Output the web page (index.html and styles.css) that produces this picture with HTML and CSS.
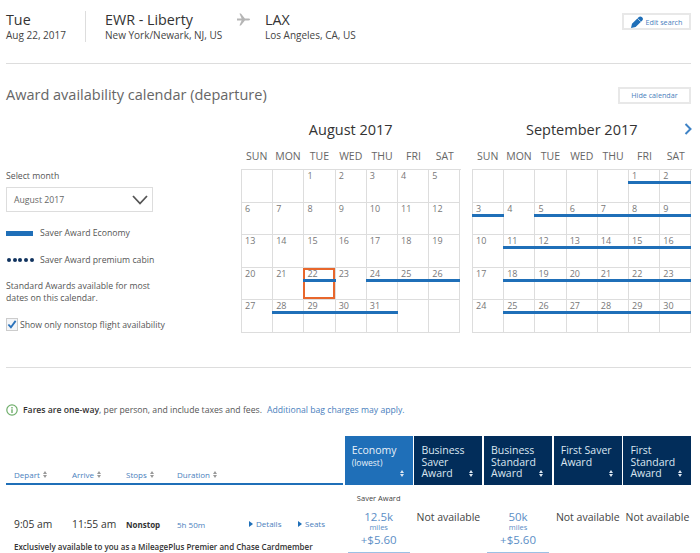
FILE: index.html
```html
<!DOCTYPE html>
<html lang="en">
<head>
<meta charset="utf-8">
<title>Award availability calendar</title>
<link rel="stylesheet" href="styles.css">
</head>
<body>
<div class="page">
  <header class="trip">
    <div class="trip-date"><div class="big">Tue</div><div class="small">Aug 22, 2017</div></div>
    <div class="trip-from"><div class="big">EWR - Liberty</div><div class="small">New York/Newark, NJ, US</div></div>
    <svg class="plane" width="13" height="13" viewBox="0 0 14 14"><path fill="#b5b5b5" d="M0 6h5L2.600 0.600h1.600L8.500 6h3.800c1 0 1.700.5 1.700 1s-.7 1-1.700 1H8.500l-4.300 5.400H2.600L5 8H0z"/></svg>
    <div class="trip-to"><div class="big">LAX</div><div class="small">Los Angeles, CA, US</div></div>
    <button class="btn btn-edit"><svg width="12" height="12" viewBox="0 0 12 12"><path fill="#1f6fb8" d="M0 12l1-4.200L7.600 1.200C8.600.2 9.800.2 10.800 1l.5.500c.9.900.9 2 0 3L4.600 11z"/><path stroke="#fff" stroke-width=".7" fill="none" d="M6.500 2.400l3.300 3.300"/></svg>Edit search</button>
  </header>
  <hr class="rule">
  <div class="title-row">
    <h1 class="title">Award availability calendar (departure)</h1>
    <button class="btn btn-hide">Hide calendar</button>
  </div>
  <section class="calendar">
    <aside class="side">
      <div class="side-label">Select month</div>
      <div class="select"><span>August 2017</span><svg width="16" height="10" viewBox="0 0 16 10"><path fill="none" stroke="#555" stroke-width="1.800" d="M1 1l7 7.500L15 1"/></svg></div>
      <div class="legend legend-eco"><i class="swatch"></i><span>Saver Award Economy</span></div>
      <div class="legend legend-prem"><i class="dots"><b></b><b></b><b></b><b></b><b></b></i><span>Saver Award premium cabin</span></div>
      <p class="note">Standard Awards available for most dates on this calendar.</p>
      <div class="check"><i class="box"><svg width="11" height="11" viewBox="0 0 11 11"><path fill="none" stroke="#2a72bb" stroke-width="2" d="M1.500 5.500l2.800 3L9.500 1.500"/></svg></i><span>Show only nonstop flight availability</span></div>
    </aside>
    <div class="months">
      <div class="month">
        <h2 class="month-title">August 2017</h2>
        <div class="dow"><span>SUN</span><span>MON</span><span>TUE</span><span>WED</span><span>THU</span><span>FRI</span><span>SAT</span></div>
        <div class="grid">
          <div class="c"></div><div class="c"></div><div class="c">1</div><div class="c">2</div><div class="c">3</div><div class="c">4</div><div class="c">5</div>
          <div class="c">6</div><div class="c">7</div><div class="c">8</div><div class="c">9</div><div class="c">10</div><div class="c">11</div><div class="c">12</div>
          <div class="c">13</div><div class="c">14</div><div class="c">15</div><div class="c">16</div><div class="c">17</div><div class="c">18</div><div class="c">19</div>
          <div class="c">20</div><div class="c">21</div><div class="c a sel">22</div><div class="c">23</div><div class="c a">24</div><div class="c a">25</div><div class="c a">26</div>
          <div class="c">27</div><div class="c a">28</div><div class="c a">29</div><div class="c a">30</div><div class="c a">31</div><div class="c"></div><div class="c"></div>
        </div>
      </div>
      <div class="month">
        <h2 class="month-title">September 2017</h2>
        <svg class="next" width="8" height="12" viewBox="0 0 8 12"><path fill="none" stroke="#3f83c6" stroke-width="2" d="M1.500 1l5 5-5 5"/></svg>
        <div class="dow"><span>SUN</span><span>MON</span><span>TUE</span><span>WED</span><span>THU</span><span>FRI</span><span>SAT</span></div>
        <div class="grid">
          <div class="c"></div><div class="c"></div><div class="c"></div><div class="c"></div><div class="c"></div><div class="c a">1</div><div class="c a">2</div>
          <div class="c a">3</div><div class="c">4</div><div class="c a">5</div><div class="c a">6</div><div class="c a">7</div><div class="c a">8</div><div class="c a">9</div>
          <div class="c">10</div><div class="c a">11</div><div class="c a">12</div><div class="c a">13</div><div class="c a">14</div><div class="c a">15</div><div class="c a">16</div>
          <div class="c">17</div><div class="c a">18</div><div class="c a">19</div><div class="c a">20</div><div class="c a">21</div><div class="c a">22</div><div class="c a">23</div>
          <div class="c">24</div><div class="c a">25</div><div class="c a">26</div><div class="c a">27</div><div class="c a">28</div><div class="c a">29</div><div class="c a">30</div>
        </div>
      </div>
    </div>
  </section>
  <hr class="rule rule-2">
  <div class="fares">
    <svg width="12" height="12" viewBox="0 0 12 12"><circle cx="6" cy="6" r="5.200" fill="none" stroke="#6fae6b" stroke-width="1.200"/><path stroke="#6fae6b" stroke-width="1.400" d="M6 3v1.400M6 5.300V9"/></svg>
    <span><b>Fares are one-way</b>, per person, and include taxes and fees.</span>
    <a class="link">Additional bag charges may apply.</a>
  </div>
  <div class="table">
    <div class="sorts">
      <span class="s-dep">Depart<i class="sort"></i></span>
      <span class="s-arr">Arrive<i class="sort"></i></span>
      <span class="s-stop">Stops<i class="sort"></i></span>
      <span class="s-dur">Duration<i class="sort"></i></span>
    </div>
    <div class="th th-eco">Economy<small>(lowest)</small><i class="sort sort-w"></i></div>
    <div class="th">Business Saver Award<i class="sort sort-w"></i></div>
    <div class="th">Business Standard Award<i class="sort sort-w"></i></div>
    <div class="th">First Saver Award<i class="sort sort-w"></i></div>
    <div class="th">First Standard Award<i class="sort sort-w"></i></div>

    <div class="flight">
      <span class="time t1">9:05 am</span>
      <span class="time t2">11:55 am</span>
      <span class="stop">Nonstop</span>
      <span class="dur">5h 50m</span>
      <span class="more m1">Details</span>
      <span class="more m2">Seats</span>
    </div>
    <div class="fare"><div class="fare-type">Saver Award</div><div class="miles">12.5k</div><div class="unit">miles</div><div class="tax">+$5.60</div><div class="pick"></div></div>
    <div class="na">Not available</div>
    <div class="fare fare-plain"><div class="miles">50k</div><div class="unit">miles</div><div class="tax">+$5.60</div><div class="pick"></div></div>
    <div class="na">Not available</div>
    <div class="na">Not available</div>
    <div class="exclusive">Exclusively available to you as a MileagePlus Premier and Chase Cardmember</div>
  </div>
</div>
</body>
</html>
```
FILE: styles.css
```css
* { box-sizing: border-box; }
html, body { margin: 0; padding: 0; height: 553px; overflow: hidden; background: #fff; }
body { font-family: "Open Sans", sans-serif; color: #555; }
.page { width: 700px; padding: 0 9px 0 6px; }
.trip { display: flex; align-items: flex-start; height: 63px; padding-top: 11px; }
.big { font-size: 14.300px; line-height: 17px; color: #333; }
.small { font-size: 10px; line-height: 14px; color: #444; }
.trip-date { width: 80px; height: 31px; border-right: 1px solid #ddd; }
.trip-from { margin-left: 19px; width: 132px; }
.plane { margin-top: 2px; }
.trip-to { margin-left: 15px; }
.btn { font-family: inherit; font-size: 7.200px; color: #4a80bd; background: #fff; border: 2px solid #e8e8e8; padding: 0; display: flex; align-items: center; justify-content: center; height: 17px; }
.btn-edit { margin-left: auto; margin-top: 2px; width: 69px; gap: 3px; }
.btn-hide { width: 73px; }
.rule { border: 0; border-top: 1px solid #ddd; margin: 0; height: 1px; }
.title-row { display: flex; justify-content: space-between; align-items: center; padding-top: 22px; height: 40px; }
.title { margin: 0; font-size: 14.500px; font-weight: 400; color: #666; line-height: 20px; }
.calendar { display: flex; height: 263px; }
.side { flex: none; width: 235px; padding-top: 66px; font-size: 8.700px; color: #555; line-height: 12px; }
.side-label { margin-bottom: 5px; }
.select { width: 147px; height: 25px; border: 1px solid #ddd; display: flex; align-items: center; justify-content: space-between; padding: 0 4px 0 7px; color: #666; }
.legend { display: flex; align-items: center; gap: 7px; }
.legend-eco { margin-top: 15px; }
.legend-prem { margin-top: 15px; gap: 5px; }
.swatch { width: 27px; height: 5px; background: #1f6fb8; display: block; }
.dots { display: flex; gap: 1.700px; width: 29px; padding-left: 1px; }
.dots b { width: 4px; height: 4px; border-radius: 50%; background: #11335f; }
.note { margin: 14px 0 0; width: 160px; }
.check { display: flex; align-items: center; gap: 2px; margin-top: 14px; }
.box { width: 12px; height: 13px; border: 1px solid #ccc; display: flex; align-items: center; justify-content: center; background: #f3f5f8; }
.months { flex: none; display: flex; gap: 11.500px; }
.month { width: 219.500px; position: relative; }
.month-title { margin: 0; font-size: 14.500px; font-weight: 400; color: #333; text-align: center; line-height: 20px; padding-top: 16px; height: 36px; }
.next { position: absolute; right: 0; top: 19px; }
.dow { display: grid; grid-template-columns: repeat(7, 1fr); height: 29px; padding-top: 9px; font-size: 10.500px; line-height: 14px; color: #666; text-align: center; }
.grid { display: grid; grid-template-columns: repeat(7, 1fr); grid-auto-rows: 32.500px; border-top: 1px solid #ddd; border-left: 1px solid #ddd; }
.c { position: relative; border-right: 1px solid #ddd; border-bottom: 1px solid #ddd; padding: 0 0 0 3px; font-size: 9px; line-height: 11px; color: #777; }
.c.a::after { content: ""; position: absolute; left: -1px; right: -1px; top: 11px; height: 3px; background: #1f6fb8; }
.c.sel::before { content: ""; position: absolute; inset: 0 0 0 -1px; border: 2px solid #e8672c; }
.rule-2 { margin: 0; }
.fares { display: flex; align-items: center; gap: 5px; height: 16px; margin-top: 34px; font-size: 8.670px; color: #555; }
.fares b { font-weight: 600; color: #333; }
.link { color: #4a80bd; }
.table { display: grid; grid-template-columns: 337px repeat(5, 68px); column-gap: 1.700px; margin-top: 18px; }
.sorts { height: 49px; border-bottom: 2px solid #1f6fb8; font-size: 8px; line-height: 11px; color: #4a80bd; display: flex; align-items: flex-end; padding: 0 0 3px 8px; }
.sorts span { display: flex; align-items: center; }
.s-dep { width: 58px; }
.s-arr { width: 54px; }
.s-stop { width: 51px; }
.sort { display: flex; flex-direction: column; gap: 1px; margin-left: 3px; }
.sort::before, .sort::after { content: ""; display: block; border-left: 2.500px solid transparent; border-right: 2.500px solid transparent; }
.sort::before { border-bottom: 3px solid #999; }
.sort::after { border-top: 3px solid #999; }
.th { position: relative; height: 49px; background: #022d5a; color: #dbe6f1; font-size: 10.500px; line-height: 11.500px; padding: 9px 4px 0 7px; }
.th-eco { background: #1f6fb8; color: #e8f1f9; }
.th small { display: block; font-size: 8.500px; line-height: 11px; }
.sort-w { position: absolute; right: 9px; bottom: 8px; margin: 0; }
.sort-w::before { border-bottom-color: #dbe6f1; }
.sort-w::after { border-top-color: #dbe6f1; }
.flight { position: relative; font-size: 8px; color: #4a80bd; height: 51px; }
.time { position: absolute; top: 32px; font-size: 10.300px; color: #333; line-height: 14px; }
.t1 { left: 8px; }
.t2 { left: 66px; }
.stop { position: absolute; left: 120px; top: 34px; font-weight: 700; color: #333; line-height: 12px; }
.dur { position: absolute; left: 171px; top: 34px; line-height: 12px; }
.more { position: absolute; top: 33px; line-height: 12px; }
.more::before { content: ""; display: inline-block; border-left: 4px solid #1f6fb8; border-top: 3.500px solid transparent; border-bottom: 3.500px solid transparent; margin-right: 3px; }
.m1 { left: 243px; }
.m2 { left: 292px; }
.fare { text-align: center; color: #5b8ec6; padding-top: 8px; height: 67px; }
.fare-plain { padding-top: 26px; }
.fare-type { font-size: 7.500px; line-height: 10px; color: #444; height: 18px; }
.miles { font-size: 11.500px; line-height: 12px; }
.unit { font-size: 7.500px; line-height: 9px; }
.tax { font-size: 11.500px; line-height: 16px; }
.pick { height: 2px; margin: 4px 3px 0; background: #9cc0e4; }
.na { font-size: 10.500px; color: #444; text-align: center; padding-top: 25px; line-height: 14px; white-space: nowrap; }
.exclusive { grid-column: 1; margin-top: -11px; padding-left: 8px; font-size: 8px; font-weight: 600; color: #333; line-height: 12px; white-space: nowrap; }
```
